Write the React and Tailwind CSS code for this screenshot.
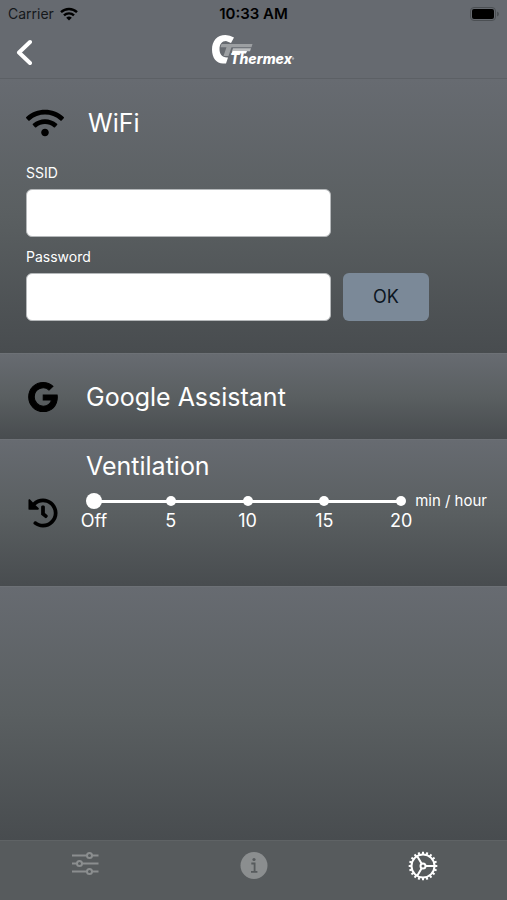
import React, { useState } from 'react'
import { FaWifi, FaGoogle, FaHistory } from 'react-icons/fa'

const STEPS = ['Off', '5', '10', '15', '20']

const GEAR_TEETH = Array.from({ length: 20 }, (_, i) => i * 18)

function SlidersIcon() {
  return (
    <svg viewBox="0 0 30 30" className="w-[30px] h-[30px]" fill="none" stroke="currentColor" strokeWidth="2">
      <path d="M2 4.5H17M22 4.5h6.5M2 12.500H7M12 12.500h16.5M2 20.500H17M22 20.500h6.5" />
      <circle cx="19.5" cy="4.5" r="2.5" />
      <circle cx="9.5" cy="12.5" r="2.5" />
      <circle cx="19.5" cy="20.5" r="2.5" />
    </svg>
  )
}

function InfoIcon() {
  return (
    <svg viewBox="0 0 30 30" className="w-[30px] h-[30px]">
      <circle cx="15" cy="14.5" r="13.5" fill="currentColor" />
      <circle cx="15" cy="8.5" r="1.6" fill="#575b5d" />
      <path d="M12.3 12.5h3.3v8M12 20.8h6.4" fill="none" stroke="#575b5d" strokeWidth="1.8" />
    </svg>
  )
}

function GearIcon() {
  return (
    <svg viewBox="0 0 30 30" className="w-[30px] h-[30px]" fill="none" stroke="currentColor" strokeWidth="2">
      <circle cx="15" cy="15" r="11.5" />
      {GEAR_TEETH.map((angle) => (
        <path key={angle} d="M15 3.5V.7" transform={`rotate(${angle} 15 15)`} />
      ))}
      <circle cx="15" cy="15" r="2.5" />
      <path d="M17.5 15h9M13.7 12.8L9.2 5.2M13.7 17.2L9.2 24.8" />
    </svg>
  )
}

const TABS = [
  { label: 'Controls', icon: SlidersIcon, color: 'text-[#8b8e8f]' },
  { label: 'Information', icon: InfoIcon, color: 'text-[#8b8e8f]' },
  { label: 'Settings', icon: GearIcon, color: 'text-white' },
]

function StatusBar() {
  return (
    <div className="grid grid-cols-3 items-center h-7 px-2 text-sm text-[#15181b]">
      <div className="flex items-center gap-1.5">
        <span>Carrier</span>
        <svg viewBox="0 0 18 14" className="w-[18px] h-[14px]" fill="none" stroke="black" strokeWidth="2.4">
          <path d="M1 5.2a11.5 11.5 0 0 1 16 0" />
          <path d="M4 8.4a7.2 7.2 0 0 1 10 0" />
          <path d="M9 13.6L6.2 10.8a4 4 0 0 1 5.6 0z" fill="black" stroke="none" />
        </svg>
      </div>
      <span className="text-center text-[15px] font-semibold text-black whitespace-nowrap">10:33 AM</span>
      <svg viewBox="0 0 30 14" className="w-[30px] h-[14px] justify-self-end">
        <rect x="1.5" y="0.5" width="25" height="13" rx="3.5" fill="none" stroke="#4b4f53" />
        <rect x="3" y="2" width="22" height="10" rx="2" fill="black" />
        <path d="M28 4.5v5q2-.8 2-2.5t-2-2.5z" fill="#4b4f53" />
      </svg>
    </div>
  )
}

function Logo() {
  return (
    <svg viewBox="212 34 84 38" className="w-[84px] h-[38px]" role="img" aria-label="Thermex">
      <path
        d="M235 37.5Q231 35 226.500 35C218 35 213 41 213 49.5C213 58 217.500 63.500 224 63.500H227L229 57.500C223 58 220.500 54 220.500 49C220.500 44 223 41 227 41L232 43z"
        fill="white"
      />
      <path d="M222.5 44H253.500L252.500 47.200H232.500L229.500 56H224.500L227.500 47.200H221.500z" fill="#9c9fa2" />
      <path d="M234 48.3H252L251 51.300H233z" fill="#b9bbbd" />
      <path d="M233.500 51H248L247 53.500H232.500z" fill="white" />
      <text x="231" y="64" fill="white" fontFamily="Inter, sans-serif" fontSize="14" fontWeight="800" fontStyle="italic">
        Thermex
      </text>
      <circle cx="294" cy="58.5" r="1.2" fill="#a6a9ac" />
    </svg>
  )
}

function Section({ className, children }) {
  return (
    <section className={`bg-linear-to-b from-[#676b71] via-[#5a5f61] to-[#484c4f] ${className}`}>
      {children}
    </section>
  )
}

function VentilationSlider() {
  const [value, setValue] = useState(0)

  return (
    <div className="flex-1 relative">
      <div className="absolute inset-x-2 top-[7px] h-[3px] bg-white" />
      <div className="flex justify-between">
        {STEPS.map((step) => (
          <div key={step} className="w-4 flex flex-col items-center">
            <span className="h-4 flex items-center">
              <span className="w-[10px] h-[10px] rounded-full bg-white" />
            </span>
            <span className="text-lg leading-6">{step}</span>
          </div>
        ))}
      </div>
      <input
        id="ventilation"
        type="range"
        min="0"
        max="4"
        value={value}
        onChange={(e) => setValue(Number(e.target.value))}
        className="absolute inset-x-0 top-0 w-full h-4 appearance-none bg-transparent [&::-webkit-slider-thumb]:appearance-none [&::-webkit-slider-thumb]:w-4 [&::-webkit-slider-thumb]:h-4 [&::-webkit-slider-thumb]:rounded-full [&::-webkit-slider-thumb]:bg-white"
      />
    </div>
  )
}

function App() {
  return (
    <div className="min-h-screen flex flex-col bg-[#484c4f] text-white font-['Inter',sans-serif]">
      <header className="bg-[#666a70] border-b border-[#5c6065]">
        <StatusBar />
        <div className="grid grid-cols-3 items-center h-[50px] px-4">
          <button aria-label="Back" className="w-4 h-7">
            <svg viewBox="0 0 16 28" className="w-4 h-7" fill="none" stroke="white" strokeWidth="4" strokeLinecap="round" strokeLinejoin="round">
              <path d="M14 3L3 13.5L14 24" />
            </svg>
          </button>
          <div className="flex justify-center">
            <Logo />
          </div>
        </div>
      </header>

      <main className="flex-1 flex flex-col">
        <Section className="pl-[26px] pr-[78px] pt-6 pb-8">
          <div className="flex items-center gap-6 h-10">
            <FaWifi className="w-[38px] h-[38px] text-black" />
            <h2 className="text-[25px] leading-8">WiFi</h2>
          </div>
          <form className="grid grid-cols-[1fr_86px] gap-x-3 mt-[18px]" onSubmit={(e) => e.preventDefault()}>
            <label htmlFor="ssid" className="col-span-2 text-sm leading-6">SSID</label>
            <input id="ssid" type="text" className="h-12 mt-1 px-3 rounded-md bg-white border border-[#b5b8ba] text-black" />
            <label htmlFor="password" className="col-span-2 mt-2 text-sm leading-6">Password</label>
            <input id="password" type="password" className="h-12 mt-1 px-3 rounded-md bg-white border border-[#b5b8ba] text-black" />
            <button type="submit" className="col-start-2 h-12 mt-1 rounded-md bg-[#7b8998] text-lg text-[#0c1622]">
              OK
            </button>
          </form>
        </Section>

        <Section className="flex items-center gap-7 h-[86px] px-7 border-t border-[#6d7176]">
          <FaGoogle className="w-[30px] h-[30px] overflow-visible stroke-black stroke-[18px] text-black" />
          <h2 className="text-[25px] leading-8">Google Assistant</h2>
        </Section>

        <Section className="flex items-center gap-7 h-[147px] pl-7 pr-5 border-t border-[#6d7176]">
          <FaHistory className="w-[30px] h-[30px] shrink-0 text-black" />
          <div className="flex-1 h-full pt-[10px]">
            <h2 className="text-[25px] leading-8">
              <label htmlFor="ventilation">Ventilation</label>
            </h2>
            <div className="flex items-start gap-1.5 mt-[11px]">
              <VentilationSlider />
              <span className="text-[15px] leading-4">min / hour</span>
            </div>
          </div>
        </Section>

        <Section className="flex-1 border-t border-[#6d7176]" />
      </main>

      <nav className="grid grid-cols-3 h-[60px] bg-[#575b5d] border-t border-[#5f6365]">
        {TABS.map(({ label, icon: Icon, color }) => (
          <button key={label} aria-label={label} className={`flex justify-center pt-[10px] ${color}`}>
            <Icon />
          </button>
        ))}
      </nav>
    </div>
  )
}

export default App
